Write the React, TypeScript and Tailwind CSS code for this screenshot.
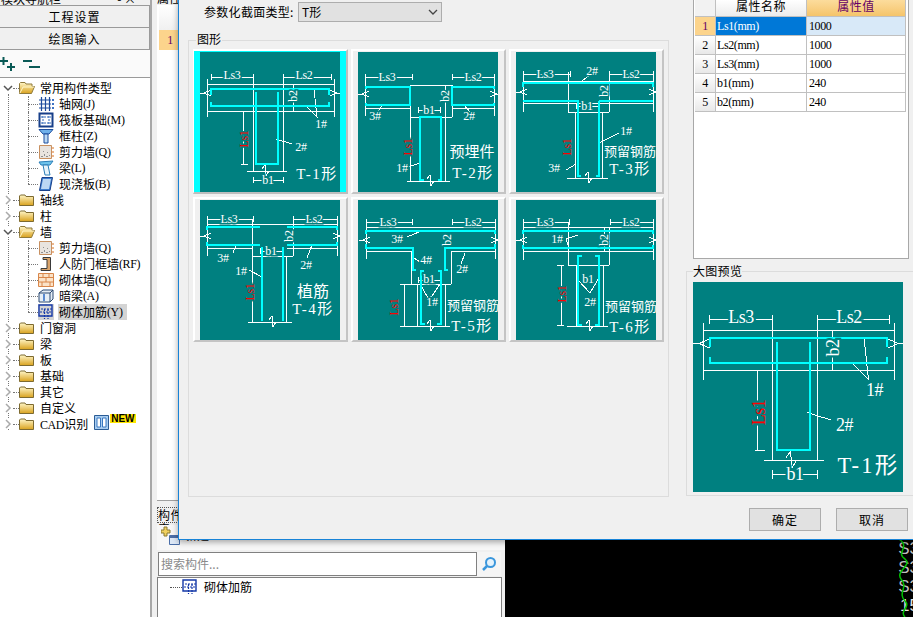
import type { ReactNode } from 'react';

const mono = "font-['Liberation_Serif',serif] text-[12px] tracking-[-0.4px]";
const TEAL = '#008080';
const CYAN = '#00ffff';

type Label = { t: string; x: number; y: number; rot?: boolean; red?: boolean; size?: number; cjk?: boolean; wide?: boolean };
type Drawing = { white: string; cyan: string; labels: Label[] };

// dimension line with end ticks
const dim = (a: number, b: number, y: number) => `M${a} ${y - 3}V${y + 3}M${a} ${y}H${b}M${b} ${y - 3}V${y + 3}`;
// break marks on the flange ends
const breakL = (x: number, y: number) => `M${x - 7} ${y}H${x - 2}M${x + 4} ${y - 3}L${x - 3} ${y}L${x + 4} ${y + 3}`;
const breakR = (x: number, y: number) => `M${x + 6} ${y}H${x + 2}M${x - 4} ${y - 3}L${x + 3} ${y}L${x - 4} ${y + 3}`;
const breakB = (x: number, y: number) => `M${x - 3} ${y - 2}L${x} ${y - 6}L${x + 1} ${y + 5}L${x + 4} ${y}`;

const ls = (x2: number, x3: number, y: number): Label[] => [
  { t: 'Ls3', x: x3, y },
  { t: 'Ls2', x: x2, y },
];

const T1: Drawing = {
  white: [
    dim(11, 53, 25), dim(83, 131, 25),
    'M7 27V65M134 27V65M7 32H134M7 59H134',
    'M53 23V119M83 23V119M47 119H87',
    'M93 32V59M43 59V112M41 112H48',
    'M114 37L117 65L107 55M76 87L92 92',
    dim(53, 83, 128),
    breakL(7, 41), breakR(134, 41), breakB(65, 119),
  ].join(''),
  cyan: 'M11 43V37H129V43M11 50V54H129V50M56 40V112H78V40',
  labels: [
    ...ls(104, 32, 23),
    { t: 'b2', x: 93, y: 44, rot: true },
    { t: '1#', x: 121, y: 72 },
    { t: 'Ls1', x: 44, y: 87, rot: true, red: true },
    { t: '2#', x: 101, y: 95 },
    { t: 'b1', x: 68, y: 128 },
    { t: 'T-1形', x: 117, y: 122, size: 15, cjk: true, wide: true },
  ],
};

const T2: Drawing = {
  white: [
    dim(7, 54, 25), dim(94, 136, 25),
    'M7 23V64M136 23V64M52 33H94M7 56H52M94 56H136',
    'M52 33V129M94 33V65M52 65H94M87 33V129M49 129H92',
    'M24 53L20 60M106 53L112 60M47 116L62 111',
    dim(60, 82, 58),
    breakL(7, 42), breakR(136, 42), breakB(72, 129),
  ].join(''),
  cyan: 'M8 37V35H52V53H8V51M136 37V35H94V53H136V51M62 129V65H83V129M63 128H66M80 128H83',
  labels: [
    ...ls(115, 29, 25),
    { t: 'b2', x: 87, y: 44, rot: true },
    { t: 'b1', x: 71, y: 58 },
    { t: '3#', x: 17, y: 64 },
    { t: '2#', x: 111, y: 64 },
    { t: '1#', x: 44, y: 116 },
    { t: 'Ls1', x: 50, y: 95, rot: true, red: true },
    { t: '预埋件', x: 114, y: 100, size: 15, cjk: true },
    { t: 'T-2形', x: 115, y: 121, size: 15, cjk: true, wide: true },
  ],
};

const T3: Drawing = {
  white: [
    dim(7, 54, 22), dim(93, 137, 22),
    'M7 20V60M137 20V60M7 29H137M7 51H137',
    'M52 20V60M93 20V60M52 60H93M59 60V126M86 60V126M51 126H92',
    'M83 91L103 81M60 112L50 118M66 29L74 23',
    dim(60, 82, 54),
    breakL(7, 40), breakR(137, 40), breakB(72, 126),
  ].join(''),
  cyan: 'M7 35V31H137V35M7 49H62V124H65M83 49V124H80M83 49H137',
  labels: [
    ...ls(115, 29, 22),
    { t: '2#', x: 76, y: 19 },
    { t: 'b2', x: 88, y: 39, rot: true },
    { t: 'b1', x: 71, y: 54 },
    { t: '1#', x: 110, y: 79 },
    { t: 'Ls1', x: 51, y: 95, rot: true, red: true },
    { t: '3#', x: 38, y: 116 },
    { t: '预留钢筋', x: 114, y: 99, size: 13, cjk: true },
    { t: 'T-3形', x: 114, y: 117, size: 15, cjk: true, wide: true },
  ],
};

const T4: Drawing = {
  white: [
    dim(7, 53, 19), dim(93, 137, 19),
    'M7 17V56M137 17V56M7 24H137M7 48H52M87 48H137',
    'M52 19V122M93 19V56M52 56H93M86 56V122M48 122H92',
    'M49 70L62 77M36 45L33 53M112 45L107 58',
    dim(60, 82, 51),
    breakL(7, 36), breakR(137, 36), breakB(72, 122),
  ].join(''),
  cyan: 'M7 30V27H60M7 42V45H60M87 27H137V30M87 45H137V42M62 47V121M83 47V121',
  labels: [
    ...ls(114, 29, 19),
    { t: 'b1', x: 71, y: 51 },
    { t: 'b2', x: 89, y: 36, rot: true },
    { t: '3#', x: 23, y: 58 },
    { t: '2#', x: 106, y: 65 },
    { t: '1#', x: 41, y: 71 },
    { t: 'Ls1', x: 50, y: 92, rot: true, red: true },
    { t: '植筋', x: 113, y: 91, size: 16, cjk: true },
    { t: 'T-4形', x: 113, y: 109, size: 15, cjk: true, wide: true },
  ],
};

const T5: Drawing = {
  white: [
    dim(8, 54, 22), dim(94, 137, 22),
    'M8 20V59M137 20V59M8 27H137M8 51H53M93 51H137',
    'M53 51V84M93 51V84M53 84H93M59 84V126M87 84V126M51 126H92',
    'M46 84V126M42 84H53M42 126H53M49 37L61 32M62 62L56 58M107 53L103 64',
    'M62 84L70 98L74 96L82 84',
    dim(60, 82, 80),
    breakL(8, 40), breakR(137, 40), breakB(72, 126),
  ].join(''),
  cyan: 'M8 34V31H137V34M8 44V48H55V70H58M90 70H87V48H137V44M66 71H63V124H67M80 71H83V124H79',
  labels: [
    ...ls(115, 30, 22),
    { t: '3#', x: 39, y: 39 },
    { t: 'b2', x: 89, y: 40, rot: true },
    { t: '4#', x: 68, y: 60 },
    { t: '2#', x: 104, y: 69 },
    { t: 'b1', x: 71, y: 79 },
    { t: '1#', x: 74, y: 102 },
    { t: 'Ls1', x: 36, y: 107, rot: true, red: true },
    { t: '预留钢筋', x: 115, y: 105, size: 13, cjk: true },
    { t: 'T-5形', x: 114, y: 126, size: 15, cjk: true, wide: true },
  ],
};

const T6: Drawing = {
  white: [
    dim(7, 53, 22), dim(94, 137, 22),
    'M7 20V60M137 20V60M7 27H137M7 51H137',
    'M52 22V65M93 27V65M52 65H93M60 65V126M87 65V126M51 126H92',
    'M45 65V125M41 65H48M41 125H48M62 35L50 39L53 48',
    'M62 80L74 93L84 76M88 27V51',
    breakL(7, 40), breakR(137, 40), breakB(73, 126),
  ].join(''),
  cyan: 'M7 34V31H137V34M7 45V48H137V45M66 56H62V125H66M79 56H83V125H79',
  labels: [
    ...ls(115, 29, 22),
    { t: '1#', x: 41, y: 39 },
    { t: 'b2', x: 88, y: 40, rot: true },
    { t: 'b1', x: 72, y: 79 },
    { t: '2#', x: 74, y: 102 },
    { t: 'Ls1', x: 46, y: 94, rot: true, red: true },
    { t: '预留钢筋', x: 115, y: 106, size: 13, cjk: true },
    { t: 'T-6形', x: 114, y: 127, size: 15, cjk: true, wide: true },
  ],
};

const Section = ({ d, size = 140 }: { d: Drawing; size?: number }) => (
  <svg width={size} height={size} viewBox="0 0 140 140" className="block shrink-0 bg-[#008080]">
    <path d={d.white} fill="none" stroke="#fff" strokeWidth={1} vectorEffect="non-scaling-stroke" shapeRendering="crispEdges" />
    <path d={d.cyan} fill="none" stroke={CYAN} strokeWidth={2} vectorEffect="non-scaling-stroke" shapeRendering="crispEdges" />
    {d.labels.map((l) => (
      <text
        key={l.t + l.x}
        x={l.x}
        y={l.y}
        fontSize={l.size ?? 12}
        letterSpacing={l.wide ? 1.5 : l.cjk ? 0 : -0.3}
        textAnchor="middle"
        dominantBaseline="central"
        fontFamily={l.cjk ? "'Liberation Serif','Noto Sans CJK SC',serif" : "'Liberation Serif',serif"}
        fill={l.red ? '#ff0000' : '#fff'}
        stroke={l.cjk ? 'none' : TEAL}
        strokeWidth={l.cjk ? 0 : 3}
        paintOrder="stroke"
        transform={l.rot ? `rotate(-90 ${l.x} ${l.y})` : undefined}
      >
        {l.t}
      </text>
    ))}
  </svg>
);

const Folder = ({ open }: { open?: boolean }) => (
  <svg width="16" height="14" viewBox="0 0 16 14" className="shrink-0">
    <defs>
      <linearGradient id="fold" x1="0" y1="0" x2="0" y2="1">
        <stop offset="0" stopColor="#fff6c8" />
        <stop offset="1" stopColor="#d9a21e" />
      </linearGradient>
    </defs>
    {open ? (
      <path d="M.5 12.5V2.5L1.5 1.5H6L7 3H13V5.5H15.5L12.5 12.5Z" fill="url(#fold)" stroke="#8f7a3c" />
    ) : (
      <path d="M.5 12.5V3L1.5 2H6L7 3.5H14.5V12.5Z" fill="url(#fold)" stroke="#7d6a30" />
    )}
    {open && <path d="M1 12L4 6H15" fill="none" stroke="#fff6c8" />}
  </svg>
);

const Ico = ({ children }: { children: ReactNode }) => (
  <svg width="16" height="16" viewBox="0 0 16 16" fill="none" className="shrink-0">
    {children}
  </svg>
);

const GridIcon = () => (
  <Ico>
    <path d="M1 4H13M1 8H13M1 12H13M3.5 1V15M7.5 1V15M11.5 1V15" stroke="#1c4a9c" strokeWidth="1.2" />
    <path d="M14 3h2v2h-2zM14 7h2v2h-2zM14 11h2v2h-2z" fill="#3f74c4" />
  </Ico>
);
const RaftIcon = () => (
  <Ico>
    <path d="M1.5 1.5H14.5V14.5H1.5Z" stroke="#173f8a" strokeWidth="2" />
    <path d="M5 4V12M11 4V12M3 5H13M3 11H13" stroke="#2f66b8" strokeDasharray="2 1" />
  </Ico>
);
const ColumnIcon = () => (
  <Ico>
    <path d="M1 1.5H15L11 6H5Z" fill="#6fb0ea" stroke="#1f4f9e" />
    <path d="M6 6H10V15H6Z" fill="#bcd9f4" stroke="#1f4f9e" />
  </Ico>
);
const ShearIcon = () => (
  <Ico>
    <path d="M1.5 1.5H13.5V14.5H1.5Z" fill="#e9e4df" stroke="#c89060" />
    <path d="M3 12h2v1H3zM6 10h1v2H6zM8 12h2v1H8zM5 7h1v1H5zM9 8h1v1H9zM11 11h1v1h-1z" fill="#8f8f8f" />
    <path d="M14 4H16M14 8H16M14 12H16" stroke="#d9701e" />
  </Ico>
);
const BeamIcon = () => (
  <Ico>
    <path d="M1 2L15 1L12 5H3Z" fill="#6ec4ec" stroke="#2b7fb8" />
    <path d="M5 5H10L12 15H7Z" fill="#e8f4fb" stroke="#2b7fb8" />
  </Ico>
);
const SlabIcon = () => (
  <Ico>
    <path d="M4 1.5H14.5L12 14.5H1.5Z" fill="#3f7fd0" stroke="#173f8a" />
    <path d="M5 3H13L11 13H3Z" fill="#bcd8f4" />
  </Ico>
);
const FrameIcon = () => (
  <Ico>
    <path d="M5 1.5H12.5V14.5H3V12.5H9V3.5H5Z" fill="#d9a36a" stroke="#3a3a3a" />
  </Ico>
);
const BrickIcon = () => (
  <Ico>
    <path d="M.5 1.5H15.5V14.5H.5Z" fill="#fbe3c8" stroke="#d8864a" />
    <path d="M1 5.5H15M1 10H15M5 2V5M11 2V5M8 6V10M4 10V14M12 10V14" stroke="#d8864a" />
  </Ico>
);
const HiddenBeamIcon = () => (
  <Ico>
    <path d="M1 5L5 2H15V11L12 14H1Z" fill="#e6eef6" stroke="#2c4a72" />
    <path d="M1 5H12V14M12 5L15 2" stroke="#2c4a72" />
    <path d="M6 6V13" stroke="#5a8ad0" strokeWidth="2" />
  </Ico>
);
const RebarIcon = () => (
  <Ico>
    <path d="M1 1H14V12H1Z" stroke="#1438a8" strokeWidth="1.4" />
    <path d="M3 5H15M2 8H14M6.5 5V15M10 5V15" stroke="#1438a8" strokeWidth="1.2" strokeDasharray="2 1" />
  </Ico>
);

type Leaf = { name: string; key: string; icon: ReactNode; active?: boolean };
type Group = { name: ReactNode; id: string; open?: boolean; items?: Leaf[]; extra?: ReactNode };

const NewBadge = () => (
  <span className="ml-[6px] flex items-start self-start -mt-[2px]">
    <svg width="15" height="16" viewBox="0 0 15 16" className="shrink-0">
      <path d="M.5 1.5H14.5V15.5H.5Z" fill="#a9cdf0" stroke="#2a5c96" />
      <path d="M3 4H6.5V13H3ZM8.5 4H12V13H8.5Z" fill="#fff" stroke="#3a78c0" />
    </svg>
    <span className="ml-px bg-[#ffe600] px-px font-['Liberation_Sans',sans-serif] text-[10px] font-bold leading-[9px] text-black">
      NEW
    </span>
  </span>
);

const tree: Group[] = [
  {
    id: 'common',
    name: '常用构件类型',
    open: true,
    items: [
      { name: '轴网', key: '(J)', icon: <GridIcon /> },
      { name: '筏板基础', key: '(M)', icon: <RaftIcon /> },
      { name: '框柱', key: '(Z)', icon: <ColumnIcon /> },
      { name: '剪力墙', key: '(Q)', icon: <ShearIcon /> },
      { name: '梁', key: '(L)', icon: <BeamIcon /> },
      { name: '现浇板', key: '(B)', icon: <SlabIcon /> },
    ],
  },
  { id: 'axis', name: '轴线' },
  { id: 'col', name: '柱' },
  {
    id: 'wall',
    name: '墙',
    open: true,
    items: [
      { name: '剪力墙', key: '(Q)', icon: <ShearIcon /> },
      { name: '人防门框墙', key: '(RF)', icon: <FrameIcon /> },
      { name: '砌体墙', key: '(Q)', icon: <BrickIcon /> },
      { name: '暗梁', key: '(A)', icon: <HiddenBeamIcon /> },
      { name: '砌体加筋', key: '(Y)', icon: <RebarIcon />, active: true },
    ],
  },
  { id: 'door', name: '门窗洞' },
  { id: 'beam', name: '梁' },
  { id: 'slab', name: '板' },
  { id: 'base', name: '基础' },
  { id: 'other', name: '其它' },
  { id: 'custom', name: '自定义' },
  { id: 'cad', name: <><span className={mono}>CAD</span>识别</>, extra: <NewBadge /> },
];

const Chevron = ({ open }: { open?: boolean }) => (
  <svg width="10" height="10" viewBox="0 0 10 10" className="shrink-0 bg-white" fill="none">
    {open ? <path d="M1 3L5 7L9 3" stroke="#555" strokeWidth="1.5" /> : <path d="M3 1L7 5L3 9" stroke="#aaa" strokeWidth="1.5" />}
  </svg>
);

const Tree = () => (
  <div className="relative pt-[2px] text-[12px] leading-4 text-black">
    <div className="absolute left-[8px] top-[16px] h-[336px] border-l border-dotted border-[#777]" />
    {tree.map((g) => (
      <div key={g.id}>
        <div className="relative flex h-4 items-center pl-[3px]">
          <Chevron open={g.open} />
          <span className="w-[6px] border-t border-dotted border-[#777]" />
          <Folder open={g.open} />
          <span className="ml-[5px]">{g.name}</span>
          {g.extra}
        </div>
        {g.items?.map((it, i) => (
          <div key={it.name + it.key} className="relative flex h-4 items-center pl-[28px]">
            <span className={`absolute left-[28px] top-0 border-l border-dotted border-[#777] ${i === (g.items?.length ?? 0) - 1 ? 'h-2' : 'h-4'}`} />
            <span className="w-[10px] border-t border-dotted border-[#777]" />
            <span className={it.active ? 'bg-[#d4d4d4]' : ''}>{it.icon}</span>
            <span className={`ml-[4px] flex h-4 items-center pl-[1px] pr-[5px] ${it.active ? 'bg-[#d4d4d4]' : ''}`}>
              {it.name}
              <span className={mono}>{it.key}</span>
            </span>
          </div>
        ))}
      </div>
    ))}
  </div>
);

const NavButton = ({ children }: { children: ReactNode }) => (
  <div className="flex h-[22px] items-center justify-center border-b border-r border-[#9a9a9a] bg-[#f0f0f0] text-[12px] tracking-[1px] text-black">
    {children}
  </div>
);

const LeftPanel = () => (
  <div className="flex h-full w-[152px] shrink-0 flex-col border-r-2 border-[#a8a8a8] bg-white">
    <div className="flex h-[6px] items-end justify-between overflow-hidden border-b border-[#9a9a9a] bg-[#f0f0f0] pl-[1px] pr-[14px] text-[12px] leading-3 text-black">
      <span>模块导航栏</span>
      <span>- ×</span>
    </div>
    <NavButton>工程设置</NavButton>
    <NavButton>绘图输入</NavButton>
    <div className="flex h-[28px] items-center gap-[3px] border-b border-[#9a9a9a] bg-[#fafafa]">
      <svg width="20" height="18" viewBox="0 0 20 18" fill="none">
        <path d="M0 6H8M3.5 2V10M7 12H15M11 8V16" stroke="#0a5a56" strokeWidth="2" />
      </svg>
      <svg width="18" height="18" viewBox="0 0 18 18" fill="none">
        <path d="M0 6H9M6 12H17" stroke="#0a5a56" strokeWidth="2" />
      </svg>
    </div>
    <Tree />
  </div>
);

const MiddlePanel = () => (
  <div className="flex h-full w-[353px] shrink-0 flex-col overflow-hidden bg-[#f0f0f0] pl-[5px] text-[12px] text-black">
    <div className="h-[501px] shrink-0 border-b border-[#a0a0a0] bg-white">
      <div className="h-[5px] overflow-hidden bg-[#f0f0f0]">
        <div className="-mt-[8px] leading-3">属性编辑</div>
      </div>
      <div className="ml-[2px] h-[25px] bg-gradient-to-b from-white to-[#f0f0f0]" />
      <div className="ml-[2px] flex h-[20px] w-[22px] items-center justify-center bg-[#fcd48c] text-[#660066]">
        <span className={mono}>1</span>
      </div>
    </div>
    <div className="mt-[6px] h-[16px] w-[50px] shrink-0 border border-dotted border-[#555] text-[12px] leading-[14px] tracking-[0.5px]">构件列表</div>
    <div className="mt-[2px] flex h-[25px] shrink-0 items-start gap-[4px] bg-[#f7f7f7] pl-[4px]">
      <svg width="20" height="20" viewBox="0 0 20 20" className="shrink-0">
        <path d="M3 2H6V5H9V8H6V11H3V8H0V5H3Z" fill="#f0d060" stroke="#8a7a30" />
        <path d="M8.5 10.5H18.5V19.5H8.5Z" fill="#dde8f6" stroke="#4a6ea8" />
        <path d="M9 11H18V13H9Z" fill="#4a6ea8" />
      </svg>
      <span className="leading-[20px]">新建</span>
    </div>
    <div className="mt-[2px] flex h-[24px] w-[344px] shrink-0 pl-px">
      <div className="flex flex-1 items-center border border-[#808080] bg-white pl-[2px] text-[#8a8a8a]">搜索构件...</div>
      <div className="flex w-[24px] items-center justify-center bg-[#f5f5f5]">
        <svg width="16" height="16" viewBox="0 0 16 16" fill="none">
          <circle cx="9.5" cy="6.5" r="4.5" stroke="#3a96dc" strokeWidth="2" fill="#e4f2fc" />
          <path d="M6 10L2 14" stroke="#3a96dc" strokeWidth="2.5" />
        </svg>
      </div>
    </div>
    <div className="mt-[1px] flex h-[60px] w-[345px] shrink-0 items-start border border-[#808080] bg-white pl-[12px] pt-[1px]">
      <span className="mt-[8px] w-[12px] border-t border-dotted border-[#555]" />
      <RebarIcon />
      <span className="ml-[6px] leading-4">砌体加筋</span>
    </div>
  </div>
);

const CadCanvas = () => (
  <div className="relative flex h-full flex-1 flex-col items-end justify-end overflow-hidden bg-black pb-[2px] font-['Liberation_Sans',sans-serif] text-[17px] leading-[19px] text-[#bdbdbd]">
    <span className="-mr-[6px]">S3</span>
    <span className="-mr-[6px]">S3</span>
    <span className="-mr-[6px]">S3</span>
    <span className="-mr-[6px] text-[#e8e8e8]">15</span>
    <svg width="20" height="78" viewBox="0 0 20 78" fill="none" className="absolute bottom-0 right-0">
      <path d="M6 0C18 8 2 14 12 20C20 26 2 32 8 40C16 48 4 54 12 62C18 68 6 72 12 78" stroke="#00c000" strokeWidth="1.5" />
    </svg>
  </div>
);

const cards = [T1, T2, T3, T4, T5, T6];

const SectionCard = ({ d, selected }: { d: Drawing; selected: boolean }) =>
  selected ? (
    <div className="h-[145px] w-[155px] border-b-2 border-l border-r-2 border-t-2 border-white border-b-[#bdbdbd] border-r-[#bdbdbd]">
      <div className="flex h-[141px] justify-center bg-[#00ffff] pt-[1px]">
        <Section d={d} />
      </div>
    </div>
  ) : (
    <div className="h-[145px] w-[155px] border-2 border-white border-b-[#c4c4c4] border-r-[#c4c4c4] pl-[5px] pt-[1px]">
      <Section d={d} />
    </div>
  );

const rows = [
  { name: 'Ls1(mm)', value: '1000' },
  { name: 'Ls2(mm)', value: '1000' },
  { name: 'Ls3(mm)', value: '1000' },
  { name: 'b1(mm)', value: '240' },
  { name: 'b2(mm)', value: '240' },
];

const PropTable = () => (
  <div className="ml-[7px] h-[259px] w-[216px] shrink-0 border-x border-b border-[#a8a8a8] bg-white pl-[1px] text-[12px] text-black">
    <div className="grid grid-cols-[21px_91px_99px]">
      <div className="h-[17px] border-b border-r border-[#c0c0c0] bg-[#f2f2f2]" />
      <div className="h-[17px] border-b border-r border-[#c0c0c0] bg-gradient-to-b from-white to-[#ececec] text-center leading-3 tracking-[0.5px]">属性名称</div>
      <div className="h-[17px] border-b border-r border-[#c0c0c0] bg-gradient-to-b from-[#fcdc9c] to-[#f5c46a] text-center leading-3 tracking-[0.5px] text-[#660066]">属性值</div>
      {rows.map((r, i) => (
        <div key={r.name} className="contents">
          <div className={`flex h-[19px] items-center justify-center border-b border-r border-[#c0c0c0] ${mono} ${i === 0 ? 'bg-[#fcd48c] text-[#660066]' : 'bg-gradient-to-b from-white to-[#e8e8e8]'}`}>
            {i + 1}
          </div>
          <div className={`flex h-[19px] items-center border-b border-r border-[#c0c0c0] pl-[1px] ${mono} ${i === 0 ? 'bg-[#0078d7] text-white' : ''}`}>{r.name}</div>
          <div className={`flex h-[19px] items-center border-b border-r border-[#c0c0c0] pl-[2px] ${mono} ${i === 0 ? 'bg-[#d8e9f8]' : ''}`}>{r.value}</div>
        </div>
      ))}
    </div>
  </div>
);

const DialogButton = ({ children }: { children: ReactNode }) => (
  <div className="flex h-[23px] w-[72px] items-center justify-center border border-[#adadad] bg-[#e1e1e1] text-[12px] tracking-[1px] text-black">
    {children}
  </div>
);

const Dialog = () => (
  <div className="absolute left-[178px] top-0 flex h-[540px] w-[735px] border-b border-l border-[#1883d7] bg-[#f0f0f0] text-[12px] text-black shadow-[0_2px_6px_rgba(0,0,0,0.35)]">
    <div className="w-[491px] shrink-0 pl-[9px]">
      <div className="flex h-[22px] items-center pl-[16px] pt-[1px]">
        <span className="w-[94px] tracking-[0.3px]">参数化截面类型:</span>
        <div className="flex h-[20px] w-[144px] items-center justify-between border border-[#adadad] bg-[#e1e1e1] pl-[3px] pr-[3px]">
          <span>T形</span>
          <svg width="10" height="6" viewBox="0 0 10 6" fill="none">
            <path d="M1 1L5 5L9 1" stroke="#444" strokeWidth="1.3" />
          </svg>
        </div>
      </div>
      <div className="relative mt-[18px] h-[457px] w-[481px] border border-[#dcdcdc]">
        <span className="absolute -top-[10px] left-[7px] bg-[#f0f0f0] px-px leading-4">图形</span>
        <div className="grid grid-cols-[repeat(3,155px)] gap-x-[3px] gap-y-[3px] pl-[4px] pt-[8px]">
          {cards.map((d, i) => (
            <SectionCard key={i} d={d} selected={i === 0} />
          ))}
        </div>
      </div>
    </div>
    <div className="ml-[16px] flex w-[227px] flex-col">
      <PropTable />
      <div className="relative mt-[12px] h-[225px] border-b border-l border-t border-[#dcdcdc] pl-[6px] pt-[10px]">
        <span className="absolute -top-[9px] left-[6px] bg-[#f0f0f0] leading-4 tracking-[0.3px]">大图预览</span>
        <Section d={T1} size={210} />
      </div>
      <div className="ml-[63px] mt-[12px] flex gap-[15px]">
        <DialogButton>确定</DialogButton>
        <DialogButton>取消</DialogButton>
      </div>
    </div>
  </div>
);

export default function App() {
  return (
    <div className="relative flex h-[617px] w-[913px] overflow-hidden bg-[#f0f0f0] font-['Noto_Sans_CJK_SC',sans-serif]">
      <LeftPanel />
      <MiddlePanel />
      <CadCanvas />
      <Dialog />
    </div>
  );
}
